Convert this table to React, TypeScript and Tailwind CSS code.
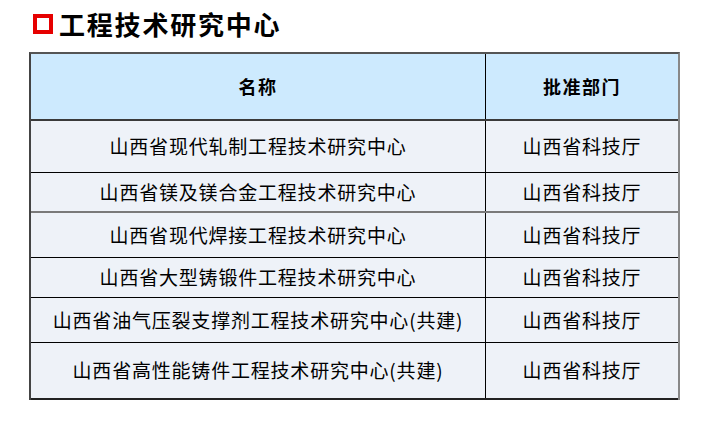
import React from "react";

type Row = { name: string; dept: string; h: string; border: string };

const rows: Row[] = [
	{ name: "山西省现代轧制工程技术研究中心", dept: "山西省科技厅", h: "h-[52px]", border: "border-b border-black" },
	{ name: "山西省镁及镁合金工程技术研究中心", dept: "山西省科技厅", h: "h-[40px]", border: "border-b-2 border-[#7a7a7a]" },
	{ name: "山西省现代焊接工程技术研究中心", dept: "山西省科技厅", h: "h-[45px]", border: "border-b border-black" },
	{ name: "山西省大型铸锻件工程技术研究中心", dept: "山西省科技厅", h: "h-[40px]", border: "border-b border-black" },
	{ name: "山西省油气压裂支撑剂工程技术研究中心(共建)", dept: "山西省科技厅", h: "h-[45px]", border: "border-b border-black" },
	{ name: "山西省高性能铸件工程技术研究中心(共建)", dept: "山西省科技厅", h: "h-[57px]", border: "border-b-2 border-[#222]" },
];

export default function App() {
	return (
		<div className="w-[716px] h-[425px] bg-white overflow-hidden" style={{ fontFamily: '"Noto Sans CJK SC", "Noto Sans", sans-serif' }}>
			{/* Title */}
			<div className="flex items-center pl-[33px] pt-[4px] h-[43px]">
				<span className="w-[20px] h-[20px] border-[4px] border-[#e60000] bg-white" />
				<h1 className="ml-[6px] text-[26px] leading-none font-bold tracking-[1.8px] text-black">工程技术研究中心</h1>
			</div>

			{/* Table */}
			<div className="ml-[29px] mt-[9px] w-[651px] border-t-2 border-l-2 border-r-2 border-t-[#555] border-l-[#444] border-r-[#888] text-black text-[19px] tracking-[0.8px]">
				<div className="flex h-[67px] bg-[#cdeafe] border-b-2 border-[#3a3a3a] font-bold text-[18px] tracking-[1.5px]">
					<div className="w-[455px] flex items-center justify-center border-r border-black">名称</div>
					<div className="flex-1 flex items-center justify-center">批准部门</div>
				</div>
				{rows.map((r) => (
					<div key={r.name} className={`flex bg-[#eef2f8] ${r.h} ${r.border}`}>
						<div className="w-[455px] flex items-center justify-center border-r border-black whitespace-nowrap">{r.name}</div>
						<div className="flex-1 flex items-center justify-center">{r.dept}</div>
					</div>
				))}
			</div>
		</div>
	);
}
